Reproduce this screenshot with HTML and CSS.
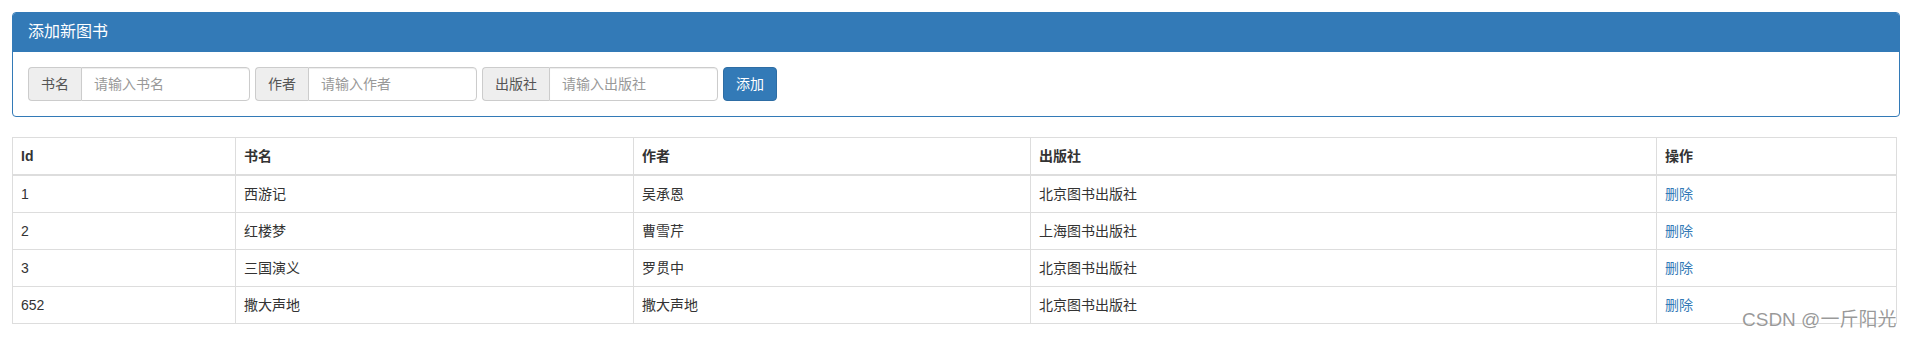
FILE: index.html
```html
<!DOCTYPE html>
<html lang="zh-CN">
<head>
  <meta charset="UTF-8">
  <title>图书管理</title>
  <link rel="stylesheet" href="styles.css">
</head>
<body>

  <div class="page">
    <div class="panel">
      <div class="panel-heading">添加新图书</div>
      <div class="panel-body">
        <div class="input-group">
          <span class="addon">书名</span>
          <input type="text" class="form-control" placeholder="请输入书名">
        </div>
        <div class="input-group">
          <span class="addon">作者</span>
          <input type="text" class="form-control" placeholder="请输入作者">
        </div>
        <div class="input-group">
          <span class="addon">出版社</span>
          <input type="text" class="form-control" placeholder="请输入出版社">
        </div>
        <button class="btn-add">添加</button>
      </div>
    </div>

    <table class="book-table">
      <colgroup>
        <col class="col-id">
        <col class="col-name">
        <col class="col-author">
        <col class="col-pub">
        <col class="col-op">
      </colgroup>
      <thead>
        <tr>
          <th>Id</th>
          <th>书名</th>
          <th>作者</th>
          <th>出版社</th>
          <th>操作</th>
        </tr>
      </thead>
      <tbody>
        <tr>
          <td>1</td>
          <td>西游记</td>
          <td>吴承恩</td>
          <td>北京图书出版社</td>
          <td><a href="#">删除</a></td>
        </tr>
        <tr>
          <td>2</td>
          <td>红楼梦</td>
          <td>曹雪芹</td>
          <td>上海图书出版社</td>
          <td><a href="#">删除</a></td>
        </tr>
        <tr>
          <td>3</td>
          <td>三国演义</td>
          <td>罗贯中</td>
          <td>北京图书出版社</td>
          <td><a href="#">删除</a></td>
        </tr>
        <tr>
          <td>652</td>
          <td>撒大声地</td>
          <td>撒大声地</td>
          <td>北京图书出版社</td>
          <td><a href="#">删除</a></td>
        </tr>
      </tbody>
    </table>

    <div class="watermark">CSDN @一斤阳光</div>
  </div>

</body>
</html>
```

FILE: styles.css
```css
* { box-sizing: border-box; }

body {
  margin: 0;
  font-family: 'Liberation Sans', 'Noto Sans CJK SC', sans-serif;
  font-size: 14px;
  line-height: 20px;
  color: #333;
  background-color: #fff;
}

.page {
  position: relative;
  padding: 12px 8px 0 12px;
  height: 338px;
}

.panel {
  border: 1px solid #337ab7;
  border-radius: 4px;
  margin-bottom: 20px;
}

.panel-heading {
  background-color: #337ab7;
  color: #fff;
  font-size: 16px;
  line-height: 18px;
  padding: 10px 15px;
  border-bottom: 1px solid #337ab7;
  border-radius: 3px 3px 0 0;
}

.panel-body {
  display: flex;
  gap: 5px;
  padding: 15px;
}

.input-group {
  display: flex;
  height: 34px;
}

.addon {
  padding: 6px 12px;
  background-color: #eee;
  border: 1px solid #ccc;
  border-right: 0;
  border-radius: 4px 0 0 4px;
  color: #555;
}

.form-control {
  width: 169px;
  height: 34px;
  padding: 6px 12px;
  border: 1px solid #ccc;
  border-radius: 0 4px 4px 0;
  font-family: inherit;
  font-size: 14px;
  color: #555;
  box-shadow: inset 0 1px 1px rgba(0, 0, 0, 0.075);
}

.form-control::placeholder { color: #999; }

.btn-add {
  height: 34px;
  padding: 6px 12px;
  background-color: #337ab7;
  border: 1px solid #2e6da4;
  border-radius: 4px;
  color: #fff;
  font-family: inherit;
  font-size: 14px;
  line-height: 20px;
  cursor: pointer;
}

.book-table {
  width: 1884px;
  border-collapse: collapse;
  table-layout: fixed;
  border: 1px solid #ddd;
}

.col-id { width: 223px; }
.col-name { width: 398px; }
.col-author { width: 397px; }
.col-pub { width: 626px; }
.col-op { width: 240px; }

.book-table th,
.book-table td {
  padding: 8px;
  border: 1px solid #ddd;
  text-align: left;
  vertical-align: top;
  line-height: 20px;
}

.book-table th {
  font-weight: bold;
  border-bottom-width: 2px;
}

.book-table a {
  color: #337ab7;
  text-decoration: none;
}

.watermark {
  position: absolute;
  left: 1742px;
  top: 309px;
  font-size: 19px;
  line-height: 22px;
  color: rgba(120, 120, 120, 0.75);
  text-shadow: 0 0 1px #fff;
  white-space: nowrap;
}
```
